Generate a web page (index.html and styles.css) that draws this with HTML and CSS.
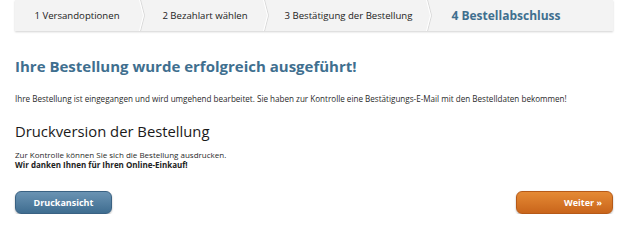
FILE: index.html
```html
<!DOCTYPE html>
<html lang="de">
<head>
<meta charset="utf-8">
<title>Bestellabschluss</title>
<link rel="stylesheet" href="styles.css">
</head>
<body>
<div class="page">
  <nav class="steps">
    <div class="step s1">1 Versandoptionen</div>
    <svg class="sep" width="8" height="31" viewBox="0 0 8 31"><polyline points="1.5,0 5.5,15.5 1.5,31" fill="none" stroke="#d9d9d9" stroke-width="1"/><polyline points="0.5,0 4.5,15.5 0.5,31" fill="none" stroke="#ffffff" stroke-width="1"/></svg>
    <div class="step s2">2 Bezahlart wählen</div>
    <svg class="sep" width="8" height="31" viewBox="0 0 8 31"><polyline points="1.5,0 5.5,15.5 1.5,31" fill="none" stroke="#d9d9d9" stroke-width="1"/><polyline points="0.5,0 4.5,15.5 0.5,31" fill="none" stroke="#ffffff" stroke-width="1"/></svg>
    <div class="step s3">3 Bestätigung der Bestellung</div>
    <svg class="sep" width="8" height="31" viewBox="0 0 8 31"><polyline points="1.5,0 5.5,15.5 1.5,31" fill="none" stroke="#d9d9d9" stroke-width="1"/><polyline points="0.5,0 4.5,15.5 0.5,31" fill="none" stroke="#ffffff" stroke-width="1"/></svg>
    <div class="step s4 active">4 Bestellabschluss</div>
  </nav>

  <h1 class="title">Ihre Bestellung wurde erfolgreich ausgeführt!</h1>
  <p class="info">Ihre Bestellung ist eingegangen und wird umgehend bearbeitet. Sie haben zur Kontrolle eine Bestätigungs-E-Mail mit den Bestelldaten bekommen!</p>

  <h2 class="subtitle">Druckversion der Bestellung</h2>
  <p class="print-text">Zur Kontrolle können Sie sich die Bestellung ausdrucken.<br><strong>Wir danken Ihnen für Ihren Online-Einkauf!</strong></p>

  <div class="actions">
    <a class="btn btn-blue" href="#">Druckansicht</a>
    <a class="btn btn-orange" href="#">Weiter »</a>
  </div>
</div>
</body>
</html>
```

FILE: styles.css
```css
html, body {
  margin: 0;
  padding: 0;
  background: #ffffff;
}

body {
  font-family: "Open Sans", "DejaVu Sans", sans-serif;
  color: #222222;
}

.page {
  padding: 0 12px 0 15px;
}

.steps {
  display: flex;
  align-items: stretch;
  height: 31px;
  width: 598px;
  background: #f3f3f3;
  box-shadow: 0 1px 2px rgba(0, 0, 0, 0.18);
}

.step {
  display: flex;
  align-items: center;
  justify-content: center;
  font-size: 9.6px;
  color: #222222;
  white-space: nowrap;
}

.sep {
  flex: 0 0 8px;
  display: block;
}

.s1 { width: 124px; }
.s2 { width: 116px; }
.s3 { width: 155px; }
.s4 { width: 144px; }

.step.active {
  font-size: 12px;
  font-weight: 700;
  color: #3f6f8f;
}

.title {
  margin: 25px 0 0 0;
  font-size: 15px;
  line-height: 20px;
  font-weight: 700;
  color: #3f6f8f;
}

.info {
  margin: 17px 0 0 0;
  font-size: 8.1px;
  line-height: 12px;
  color: #2a2a2a;
}

.subtitle {
  margin: 16px 0 0 0;
  font-size: 14.8px;
  line-height: 20px;
  font-weight: 400;
  color: #1a1a1a;
}

.print-text {
  margin: 9px 0 0 0;
  font-size: 8px;
  line-height: 9.5px;
  color: #2a2a2a;
}

.print-text strong {
  font-weight: 700;
  color: #222222;
}

.actions {
  display: flex;
  justify-content: space-between;
  width: 598px;
  margin-top: 22px;
}

.btn {
  display: flex;
  align-items: center;
  box-sizing: border-box;
  width: 97px;
  height: 23px;
  border-radius: 6px;
  font-size: 9px;
  font-weight: 700;
  color: #ffffff;
  text-decoration: none;
  box-shadow: 0 1px 2px rgba(0, 0, 0, 0.3);
}

.btn-blue {
  justify-content: center;
  background: linear-gradient(#6a93b3, #3f6d90);
  border: 1px solid #3a6283;
}

.btn-orange {
  justify-content: flex-end;
  padding-right: 10px;
  background: linear-gradient(#e58a35, #c9651b);
  border: 1px solid #b65a18;
}
```
